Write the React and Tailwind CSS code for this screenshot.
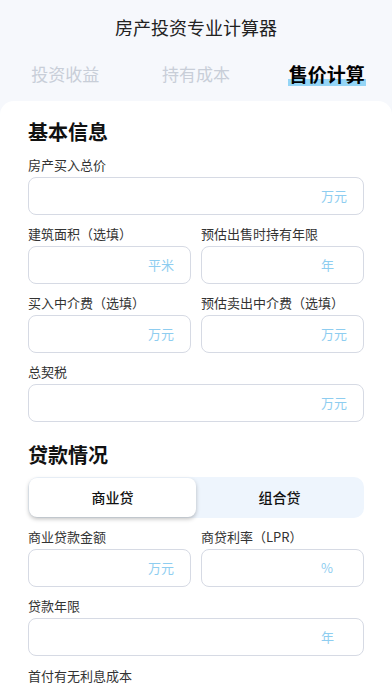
import { useState } from 'react';

const FONT = { fontFamily: '"Noto Sans CJK SC", "Noto Sans", sans-serif' };

function Field({ label, unit, className = '' }) {
	return (
		<div className={`flex flex-col ${className}`}>
			<div className="pt-[9px] pb-[2px] text-[13px] leading-[20px] text-[#333]">{label}</div>
			<div className="flex h-[38px] items-center rounded-[8px] border border-[#d6dae4] bg-white">
				<input className="min-w-0 flex-1 bg-transparent px-3 text-[14px] outline-none" />
				<span className="mr-[14px] w-[28px] text-[13px] text-[#8ecdf0]">{unit}</span>
			</div>
		</div>
	);
}

function App() {
	const [tab, setTab] = useState(2);
	const [loan, setLoan] = useState(0);
	const tabs = ['投资收益', '持有成本', '售价计算'];

	return (
		<main className="min-h-[696px] bg-[#f6f8fc]" style={FONT}>
			{/* header */}
			<div className="flex h-[54px] items-center justify-center text-[18px] text-[#222]">
				房产投资专业计算器
			</div>
			<div className="grid h-[40px] grid-cols-3 items-center">
				{tabs.map((t, i) => (
					<button key={t} onClick={() => setTab(i)} className="flex justify-center">
						{tab === i ? (
							<span className="relative text-[19px] font-bold leading-[26px] text-black">
								<span className="absolute bottom-[1px] -left-[1px] -right-[1px] h-[7px] bg-[#94d5f6]" />
								<span className="relative">{t}</span>
							</span>
						) : (
							<span className="text-[17px] leading-[26px] text-[#c8ced8]">{t}</span>
						)}
					</button>
				))}
			</div>

			{/* card */}
			<div className="mt-[7px] rounded-t-[14px] bg-white px-[28px] pt-[17px] pb-6">
				<div className="text-[20px] font-bold leading-[28px] text-[#111]">基本信息</div>
				<Field label="房产买入总价" unit="万元" />
				<div className="grid grid-cols-2 gap-x-[10px]">
					<Field label="建筑面积（选填）" unit="平米" />
					<Field label="预估出售时持有年限" unit="年" />
					<Field label="买入中介费（选填）" unit="万元" />
					<Field label="预估卖出中介费（选填）" unit="万元" />
				</div>
				<Field label="总契税" unit="万元" />

				<div className="mt-[19px] text-[20px] font-bold leading-[28px] text-[#111]">贷款情况</div>
				<div className="mt-[8px] grid h-[41px] grid-cols-2 rounded-[10px] bg-[#eef5fd] p-[1px]">
					{['商业贷', '组合贷'].map((t, i) => (
						<button
							key={t}
							onClick={() => setLoan(i)}
							className={`flex items-center justify-center rounded-[8px] text-[14px] font-medium text-[#111] ${loan === i ? 'bg-white shadow-[0_2px_4px_rgba(0,0,0,0.25)]' : ''}`}
						>
							{t}
						</button>
					))}
				</div>
				<div className="grid grid-cols-2 gap-x-[10px]">
					<Field label="商业贷款金额" unit="万元" />
					<Field label="商贷利率（LPR）" unit="%" />
				</div>
				<Field label="贷款年限" unit="年" />
				<div className="pt-[10px] text-[13px] leading-[20px] text-[#333]">首付有无利息成本</div>
			</div>
		</main>
	);
}

export default App;
